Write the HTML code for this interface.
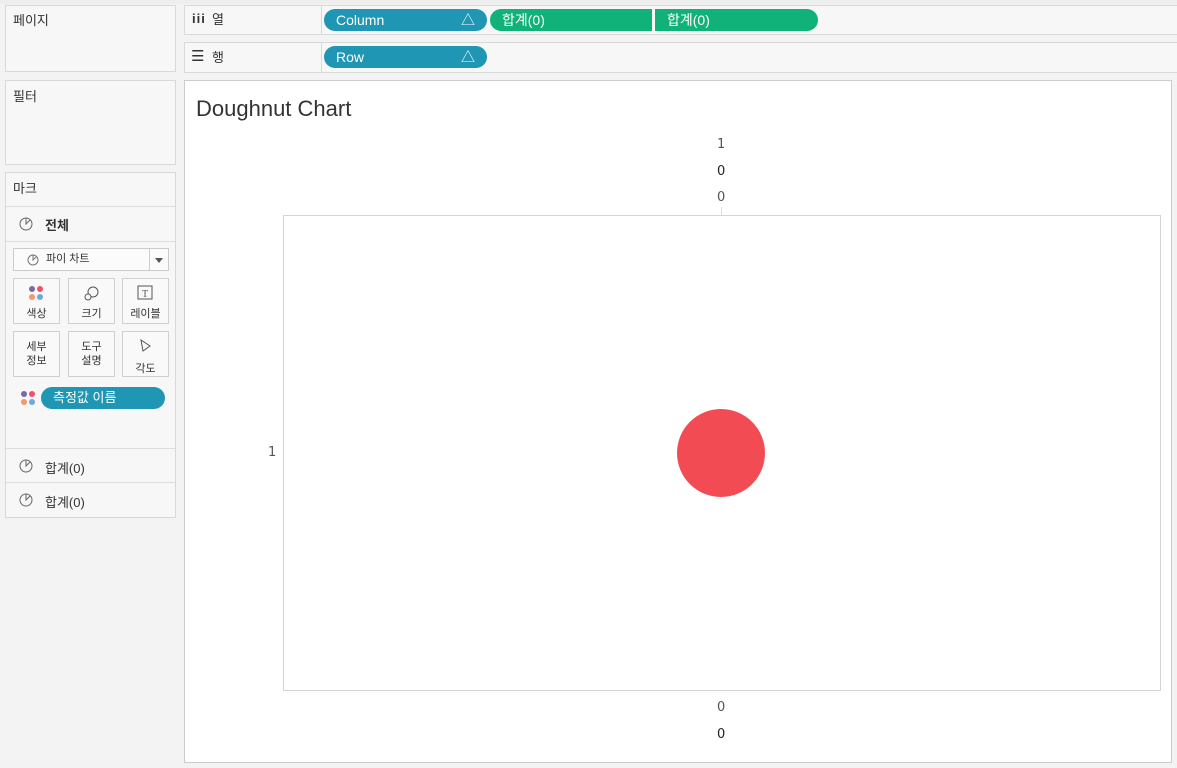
<!DOCTYPE html><html><head><meta charset="utf-8"><style>
body{margin:0;width:1177px;height:768px;background:#f3f3f3;font-family:"Liberation Sans","Noto Sans CJK KR",sans-serif;position:relative;overflow:hidden;color:#333}
.a{position:absolute;box-sizing:border-box}
.box{background:#f7f7f7;border:1px solid #d8d8d8}
.t{font-size:13px;line-height:15px}
.pill{position:absolute;height:22px;border-radius:11px;color:#fff;font-size:14px;line-height:22px;padding-left:12px;box-sizing:border-box}
.tb{background:#1f96b3}.gr{background:#10b27a}
.btn{position:absolute;width:47px;height:46px;border:1px solid #d0d0d0;background:#f9f9f9;box-sizing:border-box;font-size:11px;line-height:14px;text-align:center}
.ax{position:absolute;font-size:13px;color:#555;font-family:"DejaVu Sans",sans-serif}
</style></head><body>
<div class="a" style="left:0;top:0;width:1177px;height:4px;background:#eee"></div>
<div class="a box" style="left:5px;top:5px;width:171px;height:67px"><span class="a t" style="left:7px;top:7px">페이지</span></div>
<div class="a box" style="left:5px;top:80px;width:171px;height:85px"><span class="a t" style="left:7px;top:8px">필터</span></div>
<div class="a box" style="left:5px;top:172px;width:171px;height:346px">
<div class="a" style="left:0;top:0;width:169px;height:34px;border-bottom:1px solid #ddd"><span class="a t" style="left:7px;top:8px">마크</span></div>
<div class="a" style="left:0;top:34px;width:169px;height:35px;border-bottom:1px solid #ddd"><svg class="a" style="left:13px;top:10px" width="14" height="14"><circle cx="7" cy="7" r="6" fill="none" stroke="#666"/><path d="M7 1V7L11 3" fill="none" stroke="#666"/></svg><b class="a t" style="left:39px;top:11px">전체</b></div>
<div class="a" style="left:7px;top:75px;width:156px;height:23px;border:1px solid #ccc;background:#fbfbfb"><svg class="a" style="left:13px;top:5px" width="12" height="12"><circle cx="6" cy="6" r="5" fill="none" stroke="#777"/><path d="M6 1V6L9 3" fill="none" stroke="#777"/></svg><span class="a" style="left:32px;top:3px;font-size:11px;line-height:14px">파이 차트</span><div class="a" style="left:135px;top:0;width:1px;height:21px;background:#ccc"></div><div class="a" style="left:141px;top:9px;border:4px solid transparent;border-top:5px solid #555"></div></div>
<div class="btn" style="left:7px;top:105px"><svg style="margin-top:6px;display:block;margin-left:14px" width="16" height="16"><circle cx="4" cy="4" r="3" fill="#7b6aa0"/><circle cx="12" cy="4" r="3" fill="#f0506a"/><circle cx="4" cy="12" r="3" fill="#f8956a"/><circle cx="12" cy="12" r="3" fill="#6fa8dc"/></svg><div style="margin-top:6px">색상</div></div>
<div class="btn" style="left:62px;top:105px"><svg style="margin-top:6px;display:block;margin-left:14px" width="16" height="16"><circle cx="10" cy="7" r="5" fill="none" stroke="#555"/><circle cx="5" cy="12" r="3" fill="#f9f9f9" stroke="#555"/></svg><div style="margin-top:6px">크기</div></div>
<div class="btn" style="left:116px;top:105px"><svg style="margin-top:6px;display:block;margin-left:14px" width="16" height="16"><rect x="1" y="1" width="14" height="13" fill="none" stroke="#555"/><text x="8" y="12" font-size="10" text-anchor="middle" fill="#555" font-family="Liberation Serif">T</text></svg><div style="margin-top:6px">레이블</div></div>
<div class="btn" style="left:7px;top:158px;padding-top:8px">세부<br>정보</div>
<div class="btn" style="left:62px;top:158px;padding-top:8px">도구<br>설명</div>
<div class="btn" style="left:116px;top:158px"><svg style="margin-top:6px;display:block;margin-left:14px" width="16" height="16"><path d="M4 2L13 8L6 13Z" fill="none" stroke="#555"/></svg><div style="margin-top:8px">각도</div></div>
<svg class="a" style="left:14px;top:217px" width="16" height="16"><circle cx="4" cy="4" r="3" fill="#7b6aa0"/><circle cx="12" cy="4" r="3" fill="#f0506a"/><circle cx="4" cy="12" r="3" fill="#f8956a"/><circle cx="12" cy="12" r="3" fill="#6fa8dc"/></svg>
<div class="pill tb" style="left:35px;top:214px;width:124px;font-size:13px">측정값 이름</div>
<div class="a" style="left:0;top:275px;width:169px;height:35px;border-top:1px solid #ddd;border-bottom:1px solid #ddd"><svg class="a" style="left:13px;top:10px" width="14" height="14"><circle cx="7" cy="7" r="6" fill="none" stroke="#666"/><path d="M7 1V7L11 3" fill="none" stroke="#666"/></svg><span class="a t" style="left:39px;top:12px">합계(0)</span></div>
<div class="a" style="left:0;top:310px;width:169px;height:35px"><svg class="a" style="left:13px;top:10px" width="14" height="14"><circle cx="7" cy="7" r="6" fill="none" stroke="#666"/><path d="M7 1V7L11 3" fill="none" stroke="#666"/></svg><span class="a t" style="left:39px;top:12px">합계(0)</span></div>
</div>
<div class="a box" style="left:184px;top:5px;width:1000px;height:30px"><div class="a" style="left:136px;top:0;width:1px;height:28px;background:#d8d8d8"></div><span class="a" style="left:7px;top:5px;font-weight:bold;font-size:13px;letter-spacing:1px">iii</span><span class="a t" style="left:27px;top:6px">열</span></div>
<div class="a box" style="left:184px;top:42px;width:1000px;height:31px"><div class="a" style="left:136px;top:0;width:1px;height:29px;background:#d8d8d8"></div><span class="a" style="left:6px;top:4px;font-size:15px">☰</span><span class="a t" style="left:27px;top:7px">행</span></div>
<div class="pill tb" style="left:324px;top:9px;width:163px">Column<span style="position:absolute;right:12px">△</span></div>
<div class="pill gr" style="left:490px;top:9px;width:162px;border-radius:11px 0 0 11px">합계(0)</div>
<div class="pill gr" style="left:655px;top:9px;width:163px;border-radius:0 11px 11px 0">합계(0)</div>
<div class="pill tb" style="left:324px;top:46px;width:163px">Row<span style="position:absolute;right:12px">△</span></div>
<div class="a" style="left:184px;top:80px;width:988px;height:683px;background:#fff;border:1px solid #ccc">
<div class="a" style="left:11px;top:15px;font-size:22px;color:#333">Doughnut Chart</div>
</div>
<div class="a" style="left:283px;top:215px;width:878px;height:476px;border:1px solid #d4d4d4"></div>
<div class="a" style="left:721px;top:207px;width:1px;height:9px;background:#ddd"></div>
<div class="ax" style="left:717px;top:137px">1</div>
<div class="ax" style="left:717px;top:164px;color:#222">0</div>
<div class="ax" style="left:717px;top:190px">0</div>
<div class="ax" style="left:268px;top:445px">1</div>
<div class="ax" style="left:717px;top:700px">0</div>
<div class="ax" style="left:717px;top:727px;color:#222">0</div>
<div class="a" style="left:677px;top:409px;width:88px;height:88px;border-radius:50%;background:#f34b53"></div>
</body></html>
